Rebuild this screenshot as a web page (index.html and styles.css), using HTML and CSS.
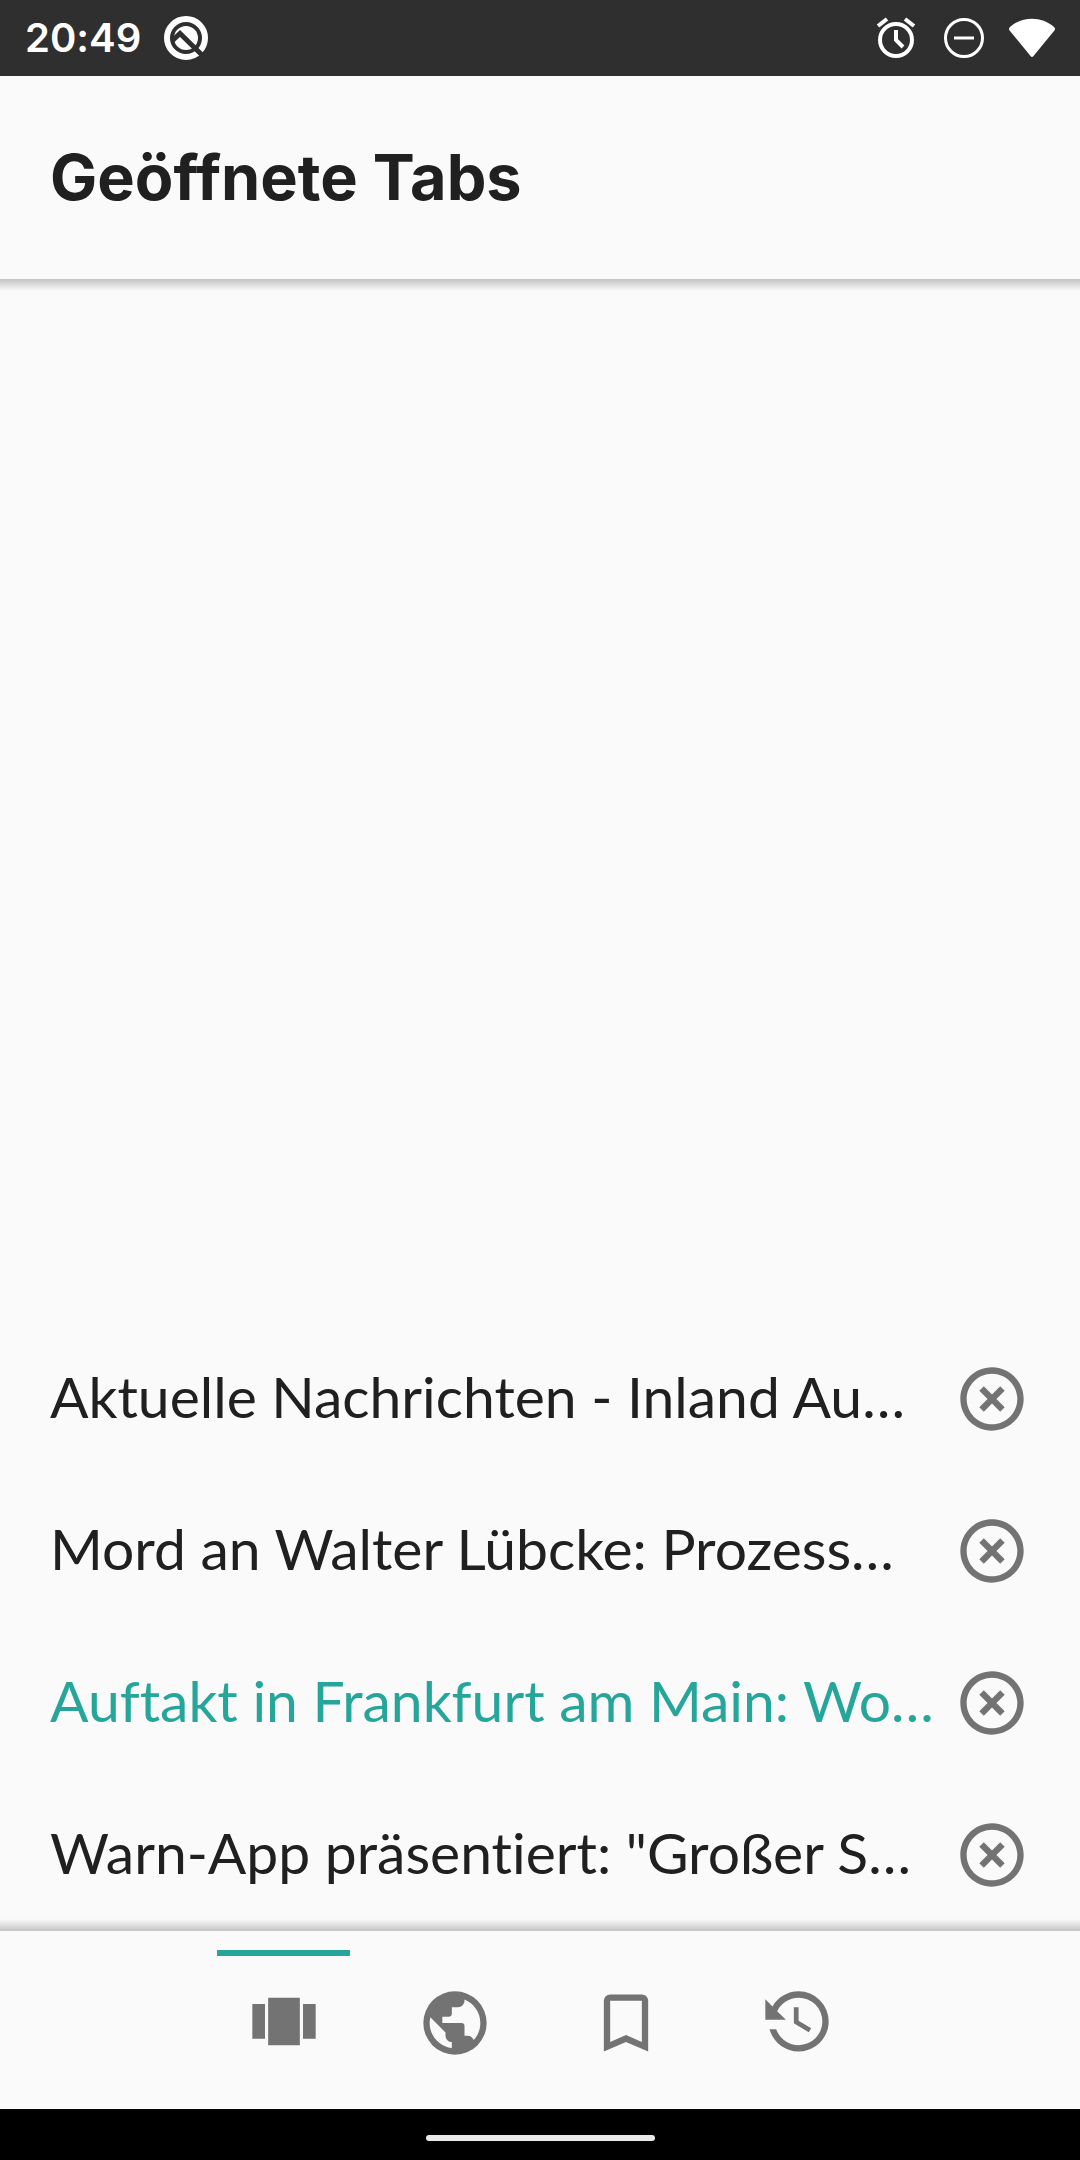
FILE: index.html
```html
<!DOCTYPE html>
<html lang="de">
<head>
<meta charset="utf-8">
<meta name="viewport" content="width=device-width, initial-scale=1">
<title>Geöffnete Tabs</title>
<link rel="stylesheet" href="styles.css">
</head>
<body>
<div class="screen">
  <div class="status">
    <time class="clock">20:49</time>
    <svg class="status-icon" viewBox="0 0 46 46" aria-hidden="true">
      <circle cx="23" cy="23" r="19" fill="none" stroke="#fff" stroke-width="6"/>
      <circle cx="23" cy="23" r="12" fill="#fff"/>
      <path d="M9 26L17 18.500L40 41" fill="none" stroke="#2f2f2f" stroke-width="5"/>
    </svg>
    <span class="spacer"></span>
    <svg class="status-icon" viewBox="0 0 46 46" aria-hidden="true" fill="none" stroke="#fff" stroke-width="4">
      <circle cx="23" cy="25" r="16"/>
      <path d="M23 15V25L30 32M5 11L14 4M41 11L32 4"/>
    </svg>
    <svg class="status-icon" viewBox="0 0 46 46" aria-hidden="true" fill="none" stroke="#fff" stroke-width="3">
      <circle cx="23" cy="23" r="18.5"/>
      <path d="M13 23H33"/>
    </svg>
    <svg class="status-icon" viewBox="0 0 46 46" aria-hidden="true" fill="#fff">
      <path d="M1 12C13 1 33 1 45 12Q47 14 45 16L24.500 41Q23 43 21.500 41L1 16Q-1 14 1 12Z"/>
    </svg>
  </div>

  <header class="header"><h1 class="title">Geöffnete Tabs</h1></header>

  <main class="content">
    <ul class="tabs">
      <li class="tab">
        <a class="tab-link" href="#tab-1">Aktuelle Nachrichten - Inland Au…</a>
        <button class="close" type="button" aria-label="Tab schließen"><svg class="icon" viewBox="0 0 24 24"><use href="#close"/></svg></button>
      </li>
      <li class="tab">
        <a class="tab-link" href="#tab-2">Mord an Walter Lübcke: Prozess…</a>
        <button class="close" type="button" aria-label="Tab schließen"><svg class="icon" viewBox="0 0 24 24"><use href="#close"/></svg></button>
      </li>
      <li class="tab">
        <a class="tab-link current" href="#tab-3" aria-current="true">Auftakt in Frankfurt am Main: Wo…</a>
        <button class="close" type="button" aria-label="Tab schließen"><svg class="icon" viewBox="0 0 24 24"><use href="#close"/></svg></button>
      </li>
      <li class="tab">
        <a class="tab-link" href="#tab-4">Warn-App präsentiert: "Großer S…</a>
        <button class="close" type="button" aria-label="Tab schließen"><svg class="icon" viewBox="0 0 24 24"><use href="#close"/></svg></button>
      </li>
    </ul>
  </main>

  <nav class="nav">
    <button class="nav-item selected" type="button" aria-label="Tabs">
      <svg class="icon" viewBox="0 0 24 24"><path d="M18 6V17H22V6M2 17H6V6H2M7 19H17V4H7Z"/></svg>
    </button>
    <button class="nav-item" type="button" aria-label="Web">
      <svg class="icon" viewBox="0 0 24 24"><path d="M17.9 17.39C17.64 16.59 16.89 16 16 16H15V13A1 1 0 0 0 14 12H8V10H10A1 1 0 0 0 11 9V7H13A2 2 0 0 0 15 5V4.59C17.93 5.77 20 8.64 20 12C20 14.08 19.2 15.97 17.9 17.39M11 19.93C7.05 19.44 4 16.08 4 12C4 11.38 4.08 10.78 4.21 10.21L9 15V16A2 2 0 0 0 11 18M12 2A10 10 0 0 0 2 12A10 10 0 0 0 12 22A10 10 0 0 0 22 12A10 10 0 0 0 12 2Z"/></svg>
    </button>
    <button class="nav-item" type="button" aria-label="Lesezeichen">
      <svg class="icon" viewBox="0 0 24 24"><path d="M17 18L12 15.82L7 18V5H17M17 3H7A2 2 0 0 0 5 5V21L12 18L19 21V5C19 3.89 18.1 3 17 3Z"/></svg>
    </button>
    <button class="nav-item" type="button" aria-label="Verlauf">
      <svg class="icon" viewBox="0 0 24 24"><path d="M11 7V12.11L15.71 14.9L16.5 13.62L12.5 11.25V7M12.5 2C8.97 2 5.91 3.92 4.27 6.77L2 4.5V11H8.5L5.75 8.25C6.96 5.73 9.5 4 12.5 4A7.5 7.5 0 0 1 20 11.5A7.5 7.5 0 0 1 12.5 19C9.23 19 6.47 16.91 5.44 14H3.34C4.44 18.03 8.11 21 12.5 21C17.74 21 22 16.75 22 11.5A9.5 9.5 0 0 0 12.5 2Z"/></svg>
    </button>
  </nav>

  <div class="gesture"><span class="handle"></span></div>
</div>

<svg class="symbols" aria-hidden="true">
  <symbol id="close" viewBox="0 0 24 24">
    <path d="M12 20C7.59 20 4 16.41 4 12S7.59 4 12 4 20 7.59 20 12 16.41 20 12 20M12 2C6.47 2 2 6.47 2 12S6.47 22 12 22 22 17.53 22 12 17.53 2 12 2M14.59 8L12 10.59L9.41 8L8 9.41L10.59 12L8 14.59L9.41 16L12 13.41L14.59 16L16 14.59L13.41 12L16 9.41Z"/>
  </symbol>
</svg>
</body>
</html>
```
FILE: styles.css
```css
* {
  box-sizing: border-box;
}

body {
  margin: 0;
  background: #fafafa;
  color: #202020;
  font-family: Lato, "Liberation Sans", sans-serif;
  font-variant-ligatures: none;
}

button {
  border: 0;
  padding: 0;
  background: none;
}

.symbols {
  display: none;
}

.screen {
  display: flex;
  flex-direction: column;
  min-height: 100vh;
}

.status {
  display: flex;
  align-items: center;
  gap: 22px;
  height: 76px;
  padding: 0 25px;
  background: #2f2f2f;
  color: #fff;
}

.clock {
  font-family: Inter, sans-serif;
  font-size: 40px;
  font-weight: 600;
  line-height: 76px;
}

.status-icon {
  width: 46px;
  height: 46px;
}

.spacer {
  flex: 1;
}

.header {
  position: relative;
  padding: 61px 50px 62px;
}

.header::after,
.nav::before {
  content: "";
  position: absolute;
  left: 0;
  right: 0;
  height: 12px;
}

.header::after {
  top: 100%;
  background: linear-gradient(#c4c4c4, #fafafa);
}

.title {
  margin: 0;
  font-family: Inter, sans-serif;
  font-size: 63px;
  font-weight: 700;
  line-height: 80px;
}

.content {
  flex: 1;
  display: flex;
  flex-direction: column;
  justify-content: flex-end;
}

.tabs {
  margin: 0;
  padding: 0;
  list-style: none;
}

.tab {
  display: flex;
  align-items: center;
  height: 152px;
  padding: 0 50px;
}

.tab-link {
  flex: 1;
  min-width: 0;
  padding-bottom: 6px;
  color: inherit;
  font-size: 57px;
  line-height: 76px;
  text-decoration: none;
  white-space: nowrap;
}

.current {
  color: #26a69a;
}

.close {
  height: 76px;
}

.icon {
  display: block;
  width: 76px;
  height: 76px;
  fill: #737373;
}

.nav {
  position: relative;
  display: flex;
  justify-content: center;
  gap: 38px;
  height: 178px;
  padding-top: 19px;
}

.nav::before {
  bottom: 100%;
  background: linear-gradient(#fafafa, #c4c4c4);
}

.nav-item {
  display: flex;
  justify-content: center;
  width: 133px;
  padding-top: 29px;
  border-top: 6px solid transparent;
}

.selected {
  border-top-color: #26a69a;
}

.gesture {
  display: flex;
  justify-content: center;
  height: 51px;
  padding-top: 26px;
  background: #000;
}

.handle {
  width: 229px;
  height: 6px;
  border-radius: 3px;
  background: #ece9ec;
}
```
